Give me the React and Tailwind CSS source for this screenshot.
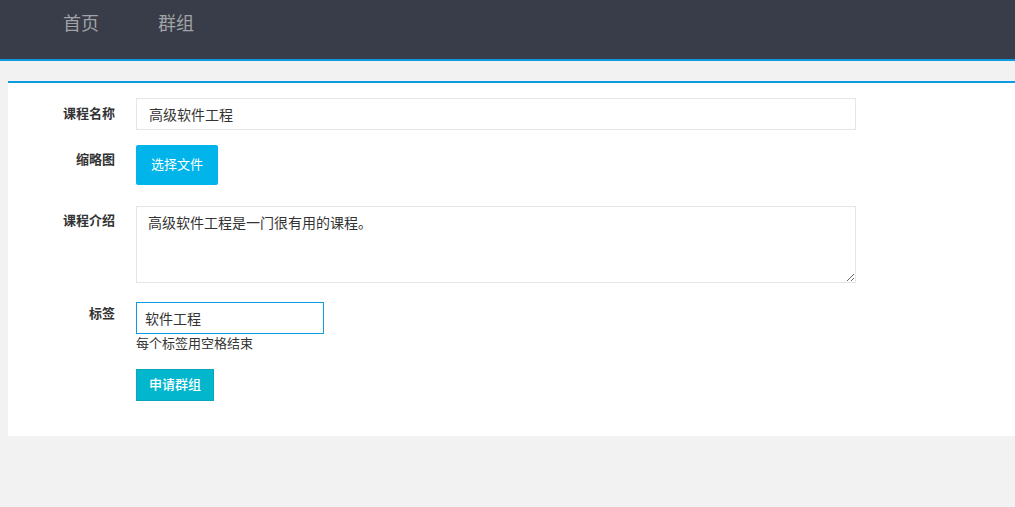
import { useState } from 'react';

export default function App() {
    const [name, setName] = useState("高级软件工程");
    const [intro, setIntro] = useState("高级软件工程是一门很有用的课程。");
    const [tag, setTag] = useState("软件工程");

    return (
        <div className="min-h-[507px] bg-[#f2f2f2] text-[#333] font-['Liberation_Sans','Noto_Sans_CJK_SC',sans-serif]">
            {/* HEADER */}
            <div className="h-[61px] bg-[#393d49] border-b-2 border-[#0d9be0] flex items-start pl-[63px] gap-[59px] pt-[12px]">
                <a className="text-[18px] leading-[24px] text-[#a2a3a7] cursor-pointer">首页</a>
                <a className="text-[18px] leading-[24px] text-[#a2a3a7] cursor-pointer">群组</a>
            </div>

            {/* FORM CARD */}
            <div className="mt-[20px] ml-[8px] bg-white border-t-2 border-[#0d9be0] pt-[15px] pb-[35px]">
                {/* Course name */}
                <div className="flex items-start">
                    <label className="w-[107px] text-right text-[13px] font-bold leading-[20px] pt-[6px]">课程名称</label>
                    <input
                        type="text"
                        value={name}
                        onChange={e => setName(e.target.value)}
                        className="ml-[21px] w-[720px] h-[32px] border border-[#e6e6e6] px-[12px] text-[14px] outline-none"
                    />
                </div>

                {/* Thumbnail */}
                <div className="flex items-start mt-[15px]">
                    <label className="w-[107px] text-right text-[13px] font-bold leading-[20px] pt-[5px]">缩略图</label>
                    <button className="ml-[21px] w-[82px] h-[40px] bg-[#01b5ea] text-white text-[13px] rounded-[2px]">
                        选择文件
                    </button>
                </div>

                {/* Intro */}
                <div className="flex items-start mt-[21px]">
                    <label className="w-[107px] text-right text-[13px] font-bold leading-[20px] pt-[5px]">课程介绍</label>
                    <textarea
                        value={intro}
                        onChange={e => setIntro(e.target.value)}
                        className="ml-[21px] w-[720px] h-[77px] border border-[#e6e6e6] px-[11px] py-[6px] text-[14px] leading-[20px] outline-none"
                    />
                </div>

                {/* Tags */}
                <div className="flex items-start mt-[19px]">
                    <label className="w-[107px] text-right text-[13px] font-bold leading-[20px] pt-[2px]">标签</label>
                    <div className="ml-[21px] flex flex-col">
                        <input
                            type="text"
                            value={tag}
                            onChange={e => setTag(e.target.value)}
                            className="w-[188px] h-[32px] border border-[#0d9be0] px-[8px] text-[14px] outline-none"
                        />
                        <span className="text-[13px] leading-[18px] mt-[1px]">每个标签用空格结束</span>
                    </div>
                </div>

                {/* Submit */}
                <div className="flex mt-[16px]">
                    <div className="w-[107px]" />
                    <button className="ml-[21px] w-[78px] h-[32px] bg-[#02b6cd] border border-[#0aa6b9] text-white text-[13px] font-medium">
                        申请群组
                    </button>
                </div>
            </div>
        </div>
    );
}
